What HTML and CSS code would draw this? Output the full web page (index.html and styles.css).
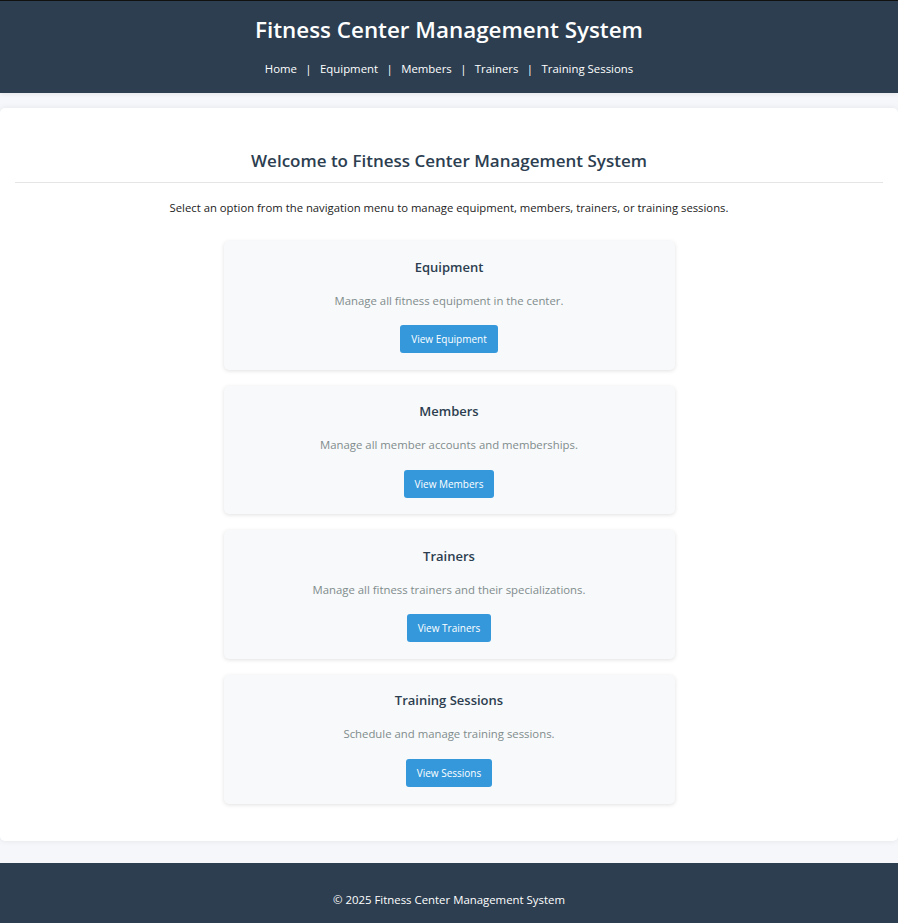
FILE: index.html
```html
<!DOCTYPE html>
<html lang="en">
<head>
<meta charset="utf-8">
<title>Fitness Center Management System</title>
<link rel="stylesheet" href="styles.css">
</head>
<body>
<header class="site-header">
  <h1 class="site-title">Fitness Center Management System</h1>
  <nav class="site-nav">
    <a href="#">Home</a><span class="sep">|</span><a href="#">Equipment</a><span class="sep">|</span><a href="#">Members</a><span class="sep">|</span><a href="#">Trainers</a><span class="sep">|</span><a href="#">Training Sessions</a>
  </nav>
</header>
<main class="container">
  <h2 class="welcome">Welcome to Fitness Center Management System</h2>
  <p class="intro">Select an option from the navigation menu to manage equipment, members, trainers, or training sessions.</p>
  <div class="cards">
    <section class="card">
      <h3 class="card-title">Equipment</h3>
      <p class="card-text">Manage all fitness equipment in the center.</p>
      <a class="btn" href="#">View Equipment</a>
    </section>
    <section class="card">
      <h3 class="card-title">Members</h3>
      <p class="card-text">Manage all member accounts and memberships.</p>
      <a class="btn" href="#">View Members</a>
    </section>
    <section class="card">
      <h3 class="card-title">Trainers</h3>
      <p class="card-text">Manage all fitness trainers and their specializations.</p>
      <a class="btn" href="#">View Trainers</a>
    </section>
    <section class="card">
      <h3 class="card-title">Training Sessions</h3>
      <p class="card-text">Schedule and manage training sessions.</p>
      <a class="btn" href="#">View Sessions</a>
    </section>
  </div>
</main>
<footer class="site-footer">
  <p>&copy; 2025 Fitness Center Management System</p>
</footer>
</body>
</html>
```
FILE: styles.css
```css
* { box-sizing: border-box; }
html, body { margin: 0; padding: 0; }
body {
  background: #f5f7fa;
  font-family: "Open Sans", "Noto Sans", sans-serif;
  color: #333;
}
.site-header {
  background: #2c3e50;
  border-top: 1px solid #111;
  color: #fff;
  text-align: center;
  padding: 14px 0 17px;
  box-shadow: 0 2px 4px rgba(0,0,0,0.06);
}
.site-title {
  margin: 0;
  font-size: 22.4px;
  font-weight: 600;
  line-height: 30px;
}
.site-nav {
  margin-top: 16px;
  font-size: 11.4px;
  line-height: 15px;
  display: flex;
  justify-content: center;
  gap: 8.4px;
}
.site-nav a { color: #fff; text-decoration: none; }
.site-nav .sep { color: #fff; }
.container {
  background: #fff;
  margin: 15px 0 22px;
  border-radius: 5px;
  box-shadow: 0 0 6px rgba(0,0,0,0.08);
  padding: 41px 15px 37.5px;
}
.welcome {
  margin: 0;
  text-align: center;
  color: #2c3e50;
  font-size: 17px;
  font-weight: 600;
  line-height: 24px;
  padding-bottom: 9px;
  border-bottom: 1px solid #e5e5e5;
}
.intro {
  text-align: center;
  font-size: 11.3px;
  line-height: 16px;
  color: #222;
  margin: 17px 0 25px;
}
.cards {
  display: flex;
  flex-direction: column;
  align-items: center;
  gap: 16px;
}
.card {
  width: 451px;
  background: #f8f9fa;
  border-radius: 5px;
  box-shadow: 0 1px 4px rgba(0,0,0,0.12);
  padding: 15.5px 15px 16.67px;
  text-align: center;
}
.card-title {
  margin: 0;
  font-size: 13px;
  font-weight: 600;
  color: #2c3e50;
  line-height: 20px;
}
.card-text {
  margin: 16px 0 16.5px;
  font-size: 11.35px;
  color: #7f8c8d;
  line-height: 16px;
}
.btn {
  display: inline-block;
  vertical-align: top;
  background: #3498db;
  color: #fff;
  text-decoration: none;
  font-size: 10px;
  line-height: 28px;
  height: 28px;
  padding: 0 11px;
  border-radius: 3px;
}
.site-footer {
  background: #2c3e50;
  color: #fff;
  text-align: center;
  padding: 29px 0 16px;
  font-size: 11.4px;
}
.site-footer p { margin: 0; line-height: 16px; }
```
